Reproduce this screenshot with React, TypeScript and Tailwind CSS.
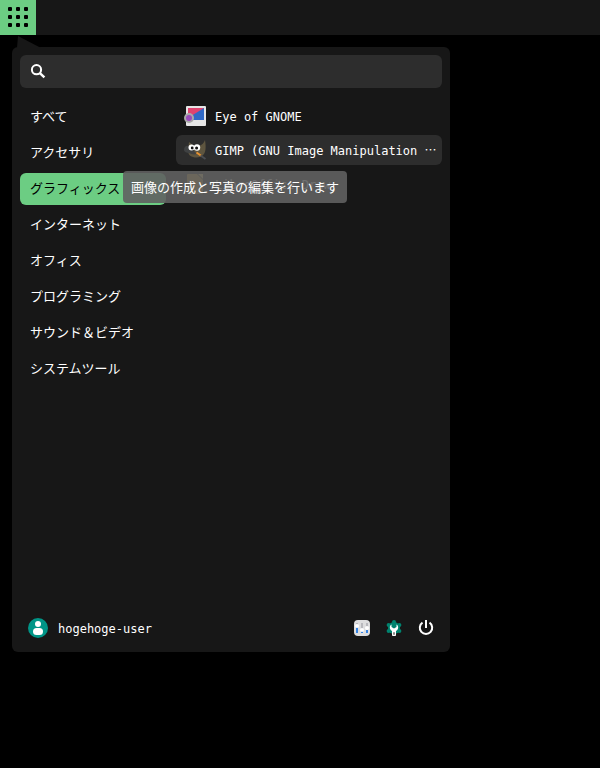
import React from 'react';

const categories = [
  'すべて',
  'アクセサリ',
  'グラフィックス',
  'インターネット',
  'オフィス',
  'プログラミング',
  'サウンド＆ビデオ',
  'システムツール',
];

const GridIcon = () => (
  <svg viewBox="0 0 20 20" className="w-5 h-5" fill="#000" aria-hidden="true">
    {[0, 8, 16].map((y) =>
      [0, 8, 16].map((x) => <rect key={`${x}-${y}`} x={x} y={y} width="4" height="4" rx="1" />)
    )}
  </svg>
);

const SearchIcon = () => (
  <svg viewBox="0 0 16 16" className="w-4 h-4 shrink-0" fill="none" stroke="#fff" strokeWidth="2" aria-hidden="true">
    <circle cx="6.5" cy="5.7" r="4.6" />
    <path d="M9.600 8.800 14.400 13.400" strokeWidth="2.4" />
  </svg>
);

const EyeOfGnomeIcon = () => (
  <svg viewBox="0 0 24 24" className="w-6 h-6 shrink-0" aria-hidden="true">
    <rect x="2" y="2" width="20" height="20" rx="1" fill="#e6e6e6" />
    <path d="M4 4h16v12H4z" fill="#3069c6" />
    <path d="M4 4h16L4 14z" fill="#e0436f" />
    <circle cx="5" cy="14" r="5" fill="#aaa9a9" />
    <circle cx="5" cy="14" r="3" fill="#9a4bbb" />
  </svg>
);

const GimpIcon = () => (
  <svg viewBox="0 0 24 24" className="w-6 h-6 shrink-0" aria-hidden="true">
    <path d="M21 2c1 6 1 11-1 14-3 4-8 4-11 3-4-1-5-4-5-7L5 4l5 4h5c3-1 5-3 6-6z" fill="#5e553f" />
    <path d="M0 12c0-3 2-5 5-4 3 0 4 2 5 5l3 3c-3 1-6 0-8-1-2 0-5-1-5-3z" fill="#3f4142" />
    <circle cx="7.500" cy="9.500" r="3" fill="#fff" />
    <circle cx="13" cy="9.500" r="3.200" fill="#fff" />
    <circle cx="8.200" cy="10" r="1.400" fill="#111" />
    <circle cx="12.600" cy="10" r="1.500" fill="#111" />
    <path d="M12.500 14.500l5 3.500" stroke="#e89230" strokeWidth="2" />
    <path d="M16.500 17.500l5 3.500" stroke="#4a4d52" strokeWidth="2" />
  </svg>
);

const DrawIcon = () => (
  <svg viewBox="0 0 24 24" className="w-6 h-6 shrink-0" aria-hidden="true">
    <path d="M4 2h9l6 6v13a1 1 0 0 1-1 1H4a1 1 0 0 1-1-1V3a1 1 0 0 1 1-1z" fill="#c99c2c" />
    <path d="M14 2h5v5z" fill="#e8c56a" />
  </svg>
);

const UserIcon = () => (
  <svg viewBox="0 0 20 20" className="w-5 h-5 shrink-0" aria-hidden="true">
    <circle cx="10" cy="10" r="10" fill="#009587" />
    <circle cx="10" cy="6" r="3" fill="#fff" />
    <rect x="5" y="10" width="10" height="7" rx="3.5" fill="#fff" />
  </svg>
);

const TweaksIcon = () => (
  <svg viewBox="0 0 16 16" className="w-4 h-4" aria-hidden="true">
    <rect width="16" height="16" rx="4" fill="#dededf" />
    <path d="M3 3v4M8 3v6M13 3v4" stroke="#b9b9bd" strokeWidth="2" />
    <path d="M3 7v6M8 11v2M13 10v3" stroke="#3584e4" strokeWidth="2" />
    <circle cx="3" cy="6" r="2" fill="#fff" />
    <circle cx="8" cy="10" r="2" fill="#fff" />
    <circle cx="13" cy="8" r="2" fill="#fff" />
  </svg>
);

const SettingsIcon = () => (
  <svg viewBox="0 0 16 16" className="w-4 h-4" aria-hidden="true">
    <g fill="#00836f">
      <circle cx="8" cy="8" r="6" />
      <circle cx="8" cy="2" r="2" />
      <circle cx="2.600" cy="4.900" r="2" />
      <circle cx="13.400" cy="4.900" r="2" />
      <circle cx="2.600" cy="11.100" r="2" />
      <circle cx="13.400" cy="11.100" r="2" />
    </g>
    <path d="M5.500 4.500C4 5.500 3.600 7 4 8.500c.3 1.200 1 1.900 2 2.500v3.500a2 2 0 0 0 4 0V11c1-.6 1.700-1.300 2-2.500.4-1.500 0-3-1.500-4V7L8 8.500 5.500 7z" fill="#fff" />
    <rect x="7" y="12" width="2" height="3" rx="1" fill="#888" />
  </svg>
);

const PowerIcon = () => (
  <svg viewBox="0 0 16 16" className="w-4 h-4" fill="none" stroke="#fff" strokeWidth="2" aria-hidden="true">
    <path d="M4.500 2.700a6.200 6.200 0 1 0 7 0" />
    <path d="M8 0v8" />
  </svg>
);

const apps = [
  { name: 'Eye of GNOME', icon: <EyeOfGnomeIcon /> },
  { name: 'GIMP (GNU Image Manipulation ', icon: <GimpIcon />, hovered: true, clipped: true },
  { name: 'LibreOffice Draw', icon: <DrawIcon /> },
];

const App: React.FC = () => {
  return (
    <div className="min-h-screen bg-black text-white font-['Noto_Sans_CJK_JP',sans-serif] text-[13px]">
      {/* Top panel */}
      <header className="h-[35px] bg-[#171717] flex">
        <button aria-label="Menu" className="w-9 pb-px bg-[#6ccd83] flex items-center justify-center">
          <GridIcon />
        </button>
      </header>

      {/* Popup menu */}
      <main className="relative mt-3 ml-3 w-[73%] min-h-[605px] rounded-md bg-[#171717] p-2 flex flex-col">
        <svg viewBox="0 0 24 12" className="absolute left-[5px] -top-[11px] w-6 h-3" aria-hidden="true">
          <path d="M1 0 24 12H0z" fill="#171717" />
        </svg>

        <label className="h-[33px] rounded-md bg-[#2d2d2d] flex items-center gap-2 px-[10px]">
          <SearchIcon />
          <input type="text" aria-label="Search" className="min-w-0 flex-1 bg-transparent outline-none" />
        </label>

        <div className="mt-[13px] flex flex-1 gap-[10px]">
          <nav className="w-[146px] shrink-0 flex flex-col gap-1">
            {categories.map((name) => (
              <button
                key={name}
                className={`h-8 px-[10px] pb-0.5 rounded-md text-left whitespace-nowrap ${
                  name === 'グラフィックス' ? 'bg-[#6ccd83] text-black' : ''
                }`}
              >
                {name}
              </button>
            ))}
          </nav>

          <div className="min-w-0 flex-1 flex flex-col gap-1">
            {apps.map((app) => (
              <button
                key={app.name}
                className={`h-[30px] px-2 rounded-md flex items-center gap-[7px] whitespace-nowrap font-['DejaVu_Sans_Mono',monospace] text-[12px] ${
                  app.hovered ? 'bg-[#2d2d2d]' : ''
                }`}
              >
                {app.icon}
                <span className="pt-0.5 whitespace-pre leading-4">
                  {app.name}
                  {app.clipped && <span lang="ja" className="font-['Noto_Sans_CJK_JP',sans-serif] leading-none">…</span>}
                </span>
              </button>
            ))}
          </div>
        </div>

        <div
          role="tooltip"
          className="absolute left-[111px] top-[124px] h-8 px-2 rounded-sm bg-[#616161]/90 flex items-center whitespace-nowrap"
        >
          画像の作成と写真の編集を行います
        </div>

        <footer className="h-8 px-2 flex items-center">
          <UserIcon />
          <span className="ml-[10px] pt-0.5 flex-1 font-['DejaVu_Sans_Mono',monospace] text-[12px]">hogehoge-user</span>
          <div className="flex gap-4">
            <button aria-label="Tweaks"><TweaksIcon /></button>
            <button aria-label="Settings"><SettingsIcon /></button>
            <button aria-label="Power"><PowerIcon /></button>
          </div>
        </footer>
      </main>
    </div>
  );
};

export default App;
